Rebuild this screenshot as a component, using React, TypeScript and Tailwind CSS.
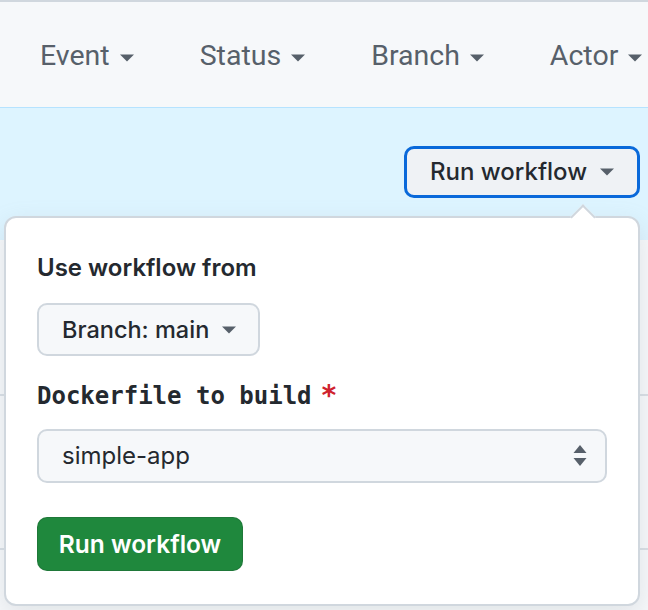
import React from "react";

function Caret({ className }: { className?: string }) {
  return (
    <svg width="14" height="8" viewBox="0 0 14 8" className={className}>
      <path d="M0 0.5 L14 0.5 L7 7.5 Z" fill="currentColor" />
    </svg>
  );
}

function FilterItem({ label }: { label: string }) {
  return (
    <div className="flex items-center gap-[10px] text-[#57606a]">
      <span className="text-[28.5px] leading-none">{label}</span>
      <Caret className="mt-[3px]" />
    </div>
  );
}

export default function App() {
  const filters = ["Event", "Status", "Branch", "Actor"];

  return (
    <div
      className="relative h-[610px] w-[648px] overflow-hidden bg-[#f6f8fa]"
      style={{ fontFamily: "Inter, 'Noto Sans', sans-serif" }}
    >
      {/* filter bar */}
      <header
        className="flex h-[108px] items-center gap-[66px] border-t-2 border-b border-t-[#d0d7de] border-b-[#b6e3ff] bg-[#f6f8fa] pl-[40px] pt-[4px]"
        style={{ fontFamily: "Roboto, 'Liberation Sans', sans-serif" }}
      >
        {filters.map((f) => (
          <FilterItem key={f} label={f} />
        ))}
      </header>

      {/* blue info band */}
      <div className="flex h-[132px] items-start justify-end bg-[#ddf4ff] pr-[8px] pt-[38px]">
        <button className="flex h-[52px] w-[236px] items-center rounded-[10px] border-[3px] border-[#0969da] bg-[#eff2f5] pl-[23px] text-[24px] font-medium text-[#24292f]">
          <span>Run workflow</span>
          <Caret className="ml-auto mr-[23px] text-[#57606a]" />
        </button>
      </div>

      {/* rows behind the popup */}
      <div className="h-[156px] border-b-2 border-[#d8dee4]" />
      <div className="h-[154px] border-b-2 border-[#d8dee4]" />
      <div className="h-[60px]" />

      {/* dropdown */}
      <div className="absolute left-[4px] top-[216px] h-[390px] w-[636px] rounded-[12px] border-2 border-[#d0d7de] bg-white pl-[31px] pt-[36px] shadow-[0_8px_24px_rgba(140,149,159,0.2)]">
        <div className="absolute -top-[10px] left-[568px] h-[18px] w-[18px] rotate-45 border-l-2 border-t-2 border-[#d0d7de] bg-white" />

        <div className="relative flex flex-col items-start">
          <div className="text-[24px] font-semibold leading-[28px] text-[#24292f]">
            Use workflow from
          </div>

          <button className="mt-[21px] flex h-[53px] w-[223px] items-center rounded-[10px] border-2 border-[#d0d7de] bg-[#f6f8fa] pl-[23px] text-[23.5px] font-medium text-[#24292f]">
            <span>Branch: main</span>
            <Caret className="ml-auto mr-[22px] text-[#57606a]" />
          </button>

          <div
            className="mt-[25px] flex items-center text-[24px] font-bold leading-[30px] text-[#24292f]"
            style={{ fontFamily: "'DejaVu Sans Mono', 'Liberation Mono', monospace" }}
          >
            <span>Dockerfile to build</span>
            <span className="ml-[9px] text-[28px] text-[#cf222e]">*</span>
          </div>

          <div className="mt-[18px] flex h-[54px] w-[570px] items-center rounded-[10px] border-2 border-[#d0d7de] bg-[#f6f8fa] pl-[23px] pr-[18px] text-[24px] text-[#24292f]">
            <span>simple-app</span>
            <svg width="14" height="22" viewBox="0 0 14 22" className="ml-auto text-[#57606a]">
              <path d="M7 0 L13.5 8 L0.5 8 Z" fill="currentColor" />
              <path d="M0.5 13 L13.5 13 L7 21 Z" fill="currentColor" />
            </svg>
          </div>

          <button className="mt-[34px] flex h-[54px] w-[206px] items-center justify-center rounded-[10px] border border-[rgba(31,35,40,0.15)] bg-[#1f883d] text-[24.5px] font-semibold text-white">
            Run workflow
          </button>
        </div>
      </div>
    </div>
  );
}
